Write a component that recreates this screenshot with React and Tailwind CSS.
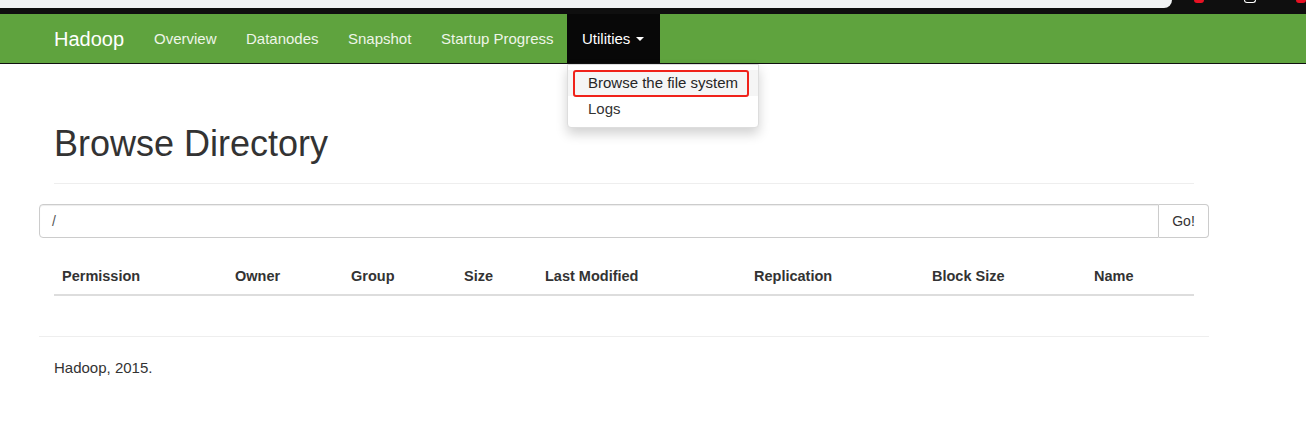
import React from "react";

const columns = [
  { label: "Permission", w: "w-[173px]" },
  { label: "Owner", w: "w-[116px]" },
  { label: "Group", w: "w-[113px]" },
  { label: "Size", w: "w-[81px]" },
  { label: "Last Modified", w: "w-[209px]" },
  { label: "Replication", w: "w-[178px]" },
  { label: "Block Size", w: "w-[162px]" },
  { label: "Name", w: "w-[108px]" },
];

const links = [
  { label: "Overview", w: "w-[92px]" },
  { label: "Datanodes", w: "w-[102px]" },
  { label: "Snapshot", w: "w-[93px]" },
  { label: "Startup Progress", w: "w-[141px]" },
];

export default function App() {
  return (
    <div className="w-[1306px] h-[421px] bg-white overflow-hidden font-['Liberation_Sans',sans-serif] text-[14px] text-[#333]">
      {/* cut-off browser chrome */}
      <div className="flex h-[8px] bg-[#0f0f0f]">
        <div className="w-[1173px] bg-[#f1f3f4] rounded-br-[8px]"></div>
        <div className="flex-1 flex gap-[40px] pl-[22px]">
          <span className="w-[10px] h-[3px] bg-[#e81123] rounded-b-full"></span>
          <span className="w-[12px] h-[3px] border border-t-0 border-white rounded-b"></span>
          <span className="w-[10px] h-[3px] bg-[#e81123] rounded-b-full"></span>
        </div>
      </div>
      <div className="h-[6px] bg-[#0f0f0f]"></div>

      {/* navbar */}
      <nav className="relative h-[50px] bg-[#5fa33e] border-b border-[#111]">
        <div className="flex h-[49px] items-stretch pl-[54px] pt-[1px]">
          <a className="flex items-center w-[85px] text-white text-[20px]">Hadoop</a>
          {links.map((l) => (
            <a key={l.label} className={`${l.w} flex items-center pl-[15px] whitespace-nowrap text-[#eef5e8] text-[15px]`}>
              {l.label}
            </a>
          ))}
          <a className="flex items-center w-[93px] pl-[15px] -mt-[1px] bg-[#080808] text-white text-[15px]">
            <span className="pt-[1px]">Utilities</span>
            <span className="ml-[6px] mt-[1px] w-0 h-0 border-x-[4px] border-x-transparent border-t-[4px] border-t-white"></span>
          </a>
        </div>

        {/* open dropdown */}
        <div className="absolute left-[567px] top-[50px] w-[192px] py-[5px] bg-white border border-[#ddd] rounded-b-[4px] shadow-[0_6px_12px_rgba(0,0,0,0.18)] text-[15px]">
          <div className="relative h-[26px] flex items-center pl-[20px] bg-[#f5f5f5] text-[#262626]">
            Browse the file system
            <span className="absolute left-[5px] top-[0px] w-[176px] h-[27px] border-2 border-[#f0221a] rounded-[3px]"></span>
          </div>
          <div className="h-[26px] flex items-center pl-[20px] text-[#333]">Logs</div>
        </div>
      </nav>

      {/* main */}
      <div className="pl-[39px] w-[1209px]">
        <div className="px-[15px]">
          <div className="pt-[60px] pb-[19px] border-b border-[#eee]">
            <h1 className="font-['Liberation_Sans',sans-serif] text-[36px] leading-[40px] text-[#333]">
              Browse Directory
            </h1>
          </div>
        </div>

        <div className="mt-[20px] flex h-[34px]">
          <div className="flex-1 flex items-center pl-[12px] border border-[#ccc] rounded-l-[4px] shadow-[inset_0_1px_1px_rgba(0,0,0,0.075)] text-[#555]">
            /
          </div>
          <button className="w-[50px] border border-l-0 border-[#ccc] rounded-r-[4px] text-[#333]">Go!</button>
        </div>

        <div className="px-[15px] mt-[20px]">
          <div className="flex h-[38px] items-center pt-[2px] border-b-2 border-[#ddd] font-bold text-[14.5px] text-[#333]">
            {columns.map((c) => (
              <div key={c.label} className={`${c.w} px-[8px]`}>
                {c.label}
              </div>
            ))}
          </div>
        </div>

        <div className="mt-[40px] border-t border-[#eee] pt-[20px] pl-[15px] text-[15px] text-[#333]">
          Hadoop, 2015.
        </div>
      </div>
    </div>
  );
}
